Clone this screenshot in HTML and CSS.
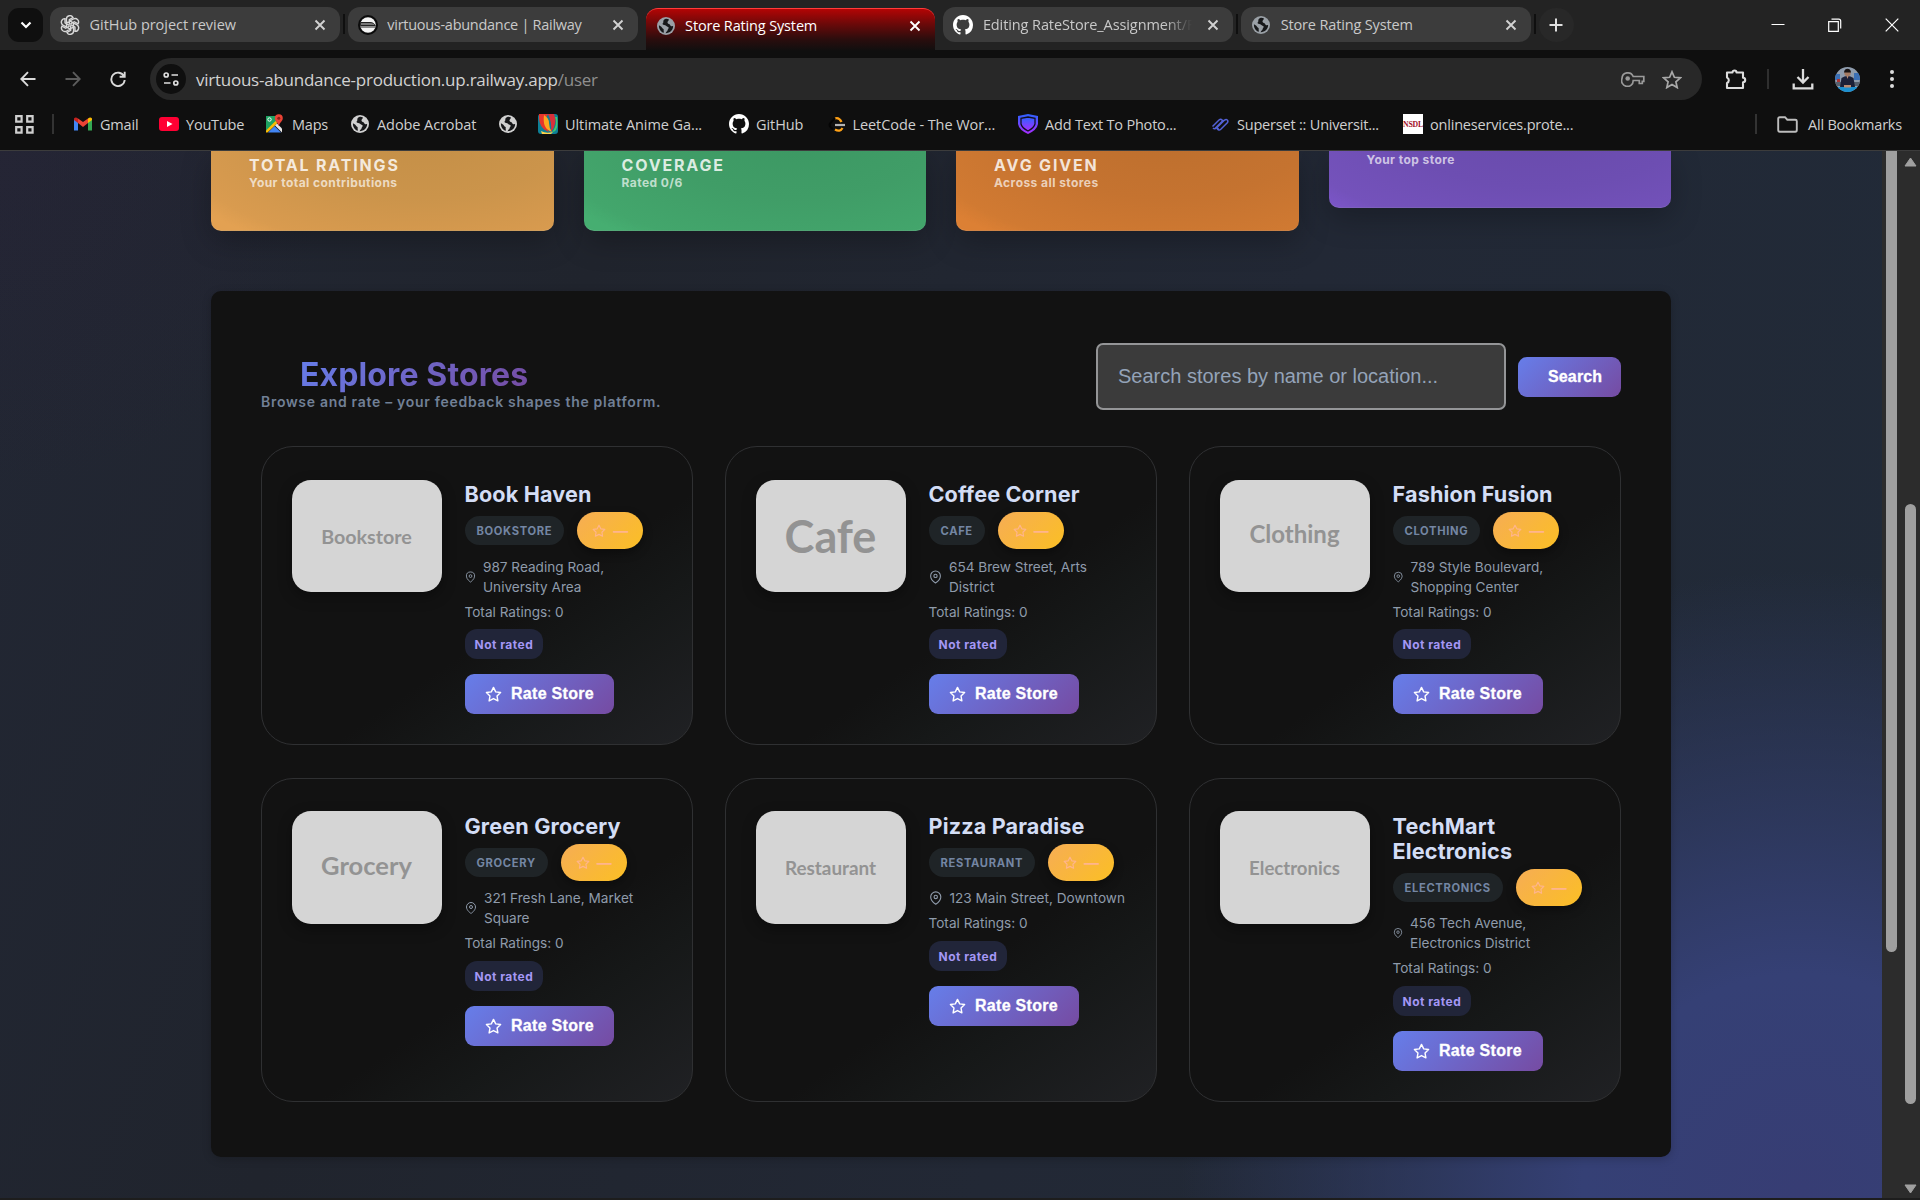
FILE: index.html
```html
<!DOCTYPE html>
<html lang="en">
<head>
<meta charset="utf-8">
<title>Store Rating System</title>
<link rel="stylesheet" href="styles.css">
</head>
<body>
<svg class="defs" width="0" height="0">
  <symbol id="x" viewBox="0 0 12 12"><path d="M1.5 1.5l9 9M10.5 1.5l-9 9" stroke="currentColor" stroke-width="1.9" fill="none"/></symbol>
  <symbol id="globe" viewBox="0 0 24 24"><circle cx="12" cy="12" r="12" fill="currentColor"/><path d="M11 2.5c-2 .8-3 2.500-2.500 4 .3 1-1.500 1.500-1 3 .8 1.600 3.500.6 4.500 2 1 1.500 3 1 3.500 2.500.4 1.300-1.500 2.500-1.500 4 0 1.300-2 1.500-2.500 3.500 6 0 10-4 10-9.500-2 .5-3.500 0-4-1.500-.6-1.600-3-1-3.500-3C13.700 5.500 16 5 16 3.200 14.500 2.400 12.500 2.100 11 2.500zM2.600 11c-.5 5 2.900 9.200 6.400 10.100.5-1.800-.5-2.600 0-4.100.3-1.200-1.700-1.500-2.500-3C5.800 12.600 4 12 2.600 11z" fill="#17181a"/></symbol>
  <symbol id="github" viewBox="0 0 16 16"><path fill="#fff" d="M8 0C3.580 0 0 3.580 0 8c0 3.540 2.290 6.530 5.470 7.590.4.070.55-.17.55-.38 0-.19-.01-.82-.01-1.490-2.010.37-2.530-.49-2.690-.94-.09-.23-.48-.94-.82-1.130-.28-.15-.68-.52-.01-.53.63-.01 1.080.58 1.230.82.72 1.210 1.870.87 2.330.66.07-.52.28-.87.51-1.070-1.780-.2-3.640-.89-3.640-3.950 0-.87.31-1.590.82-2.150-.08-.2-.36-1.020.08-2.120 0 0 .67-.21 2.200.82.64-.18 1.320-.27 2-.27s1.360.09 2 .27c1.530-1.040 2.200-.82 2.200-.82.44 1.100.16 1.920.08 2.120.51.56.82 1.270.82 2.150 0 3.070-1.870 3.750-3.650 3.950.29.25.54.73.54 1.480 0 1.070-.01 1.930-.01 2.200 0 .21.15.46.55.38A8.010 8.010 0 0016 8c0-4.420-3.580-8-8-8z"/></symbol>
  <symbol id="star" viewBox="0 0 24 24"><path d="M12 2l3.090 6.260L22 9.270l-5 4.870 1.180 6.880L12 17.770l-6.180 3.250L7 14.140 2 9.270l6.910-1.010z" fill="none" stroke="currentColor" stroke-width="2" stroke-linejoin="round"/></symbol>
  <symbol id="pin" viewBox="0 0 24 24"><path d="M21 10c0 7-9 13-9 13s-9-6-9-13a9 9 0 0118 0z" fill="none" stroke="currentColor" stroke-width="2"/><circle cx="12" cy="10" r="3" fill="none" stroke="currentColor" stroke-width="2"/></symbol>
  <symbol id="openai" viewBox="0 0 24 24"><g fill="none" stroke="#d8d8d8" stroke-width="1.700"><path id="petal" d="M12 7.200L7.700 9.700v-5A4.200 4.200 0 0115.600 3l-4.400 2.600v6"/><use href="#petal" transform="rotate(60 12 12)"/><use href="#petal" transform="rotate(120 12 12)"/><use href="#petal" transform="rotate(180 12 12)"/><use href="#petal" transform="rotate(240 12 12)"/><use href="#petal" transform="rotate(300 12 12)"/></g></symbol>
</svg>

<header class="browser">
  <div class="tabstrip">
    <button class="tab-search"><svg width="12" height="8" viewBox="0 0 12 8"><path d="M1.500 1.500L6 6l4.500-4.500" fill="none" stroke="#fff" stroke-width="2.200"/></svg></button>
    <div class="tab"><svg class="fav"><use href="#openai"/></svg><span class="t1">GitHub project review</span><svg class="close"><use href="#x"/></svg></div>
    <i class="tabsep"></i>
    <div class="tab"><svg class="fav" viewBox="0 0 20 20"><circle cx="10" cy="10" r="10" fill="#0b0b0b"/><circle cx="10" cy="10" r="7.800" fill="#f4f4f4"/><path d="M2.500 7.500h9.500c3 0 4.500 1.500 5.300 3H2.300zM2.400 12h15.100" fill="#777" stroke="#222" stroke-width="1"/></svg><span class="t2">virtuous-abundance | Railway</span><svg class="close"><use href="#x"/></svg></div>
    <i class="tabsep off"></i>
    <div class="tab active"><svg class="fav grey"><use href="#globe"/></svg><span class="t3">Store Rating System</span><svg class="close"><use href="#x"/></svg></div>
    <i class="tabsep off"></i>
    <div class="tab"><svg class="fav"><use href="#github"/></svg><span class="t4">Editing RateStore_Assignment/F</span><svg class="close"><use href="#x"/></svg></div>
    <i class="tabsep"></i>
    <div class="tab"><svg class="fav grey"><use href="#globe"/></svg><span class="t3">Store Rating System</span><svg class="close"><use href="#x"/></svg></div>
    <i class="tabsep"></i>
    <button class="newtab"><svg width="14" height="14"><path d="M7 .5v13M.5 7h13" stroke="#e0e0e0" stroke-width="2"/></svg></button>
    <div class="wincontrols">
      <svg width="14" height="14"><path d="M.5 6.500h13" stroke="#fff"/></svg>
      <svg width="14" height="14"><path d="M.7 3.700h9.600v9.600H.7zM3.500 1.200h7.200q2 0 2 2v7.300" fill="none" stroke="#fff" stroke-width="1.200"/></svg>
      <svg width="14" height="14"><path d="M.7.7l12.600 12.600M13.300.7L.7 13.300" stroke="#fff" stroke-width="1.200"/></svg>
    </div>
  </div>

  <div class="toolbar">
    <svg class="nav" viewBox="0 0 16 16"><path d="M15.500 8H1.500M8 1.200L1.300 8 8 14.800" fill="none" stroke="#dadada" stroke-width="1.900"/></svg>
    <svg class="nav" viewBox="0 0 16 16"><path d="M.5 8h14M8 1.200L14.700 8 8 14.800" fill="none" stroke="#5c5c5c" stroke-width="1.900"/></svg>
    <svg class="nav" viewBox="0 0 16 16"><path d="M14 5.300A6.700 6.700 0 1014.700 9M14.700.8v5H9.600" fill="none" stroke="#dadada" stroke-width="1.900"/></svg>
    <div class="omnibox">
      <div class="siteinfo"><svg width="16" height="14" viewBox="0 0 16 14"><g fill="none" stroke="#dedede" stroke-width="1.700"><circle cx="3.200" cy="3" r="2"/><path d="M8.500 3H15M1 11h6.500"/><circle cx="12.800" cy="11" r="2"/></g></svg></div>
      <div class="url">virtuous-abundance-production.up.railway.app<b>/user</b></div>
      <svg class="key" width="24" height="16" viewBox="0 0 24 16"><path d="M12.200 5.500H22.800v4.800h-1.500v2.200h-3v-3h-6.100A5.800 5.800 0 111 7.500a5.800 5.800 0 0111.200-2z" fill="none" stroke="#9a9a9a" stroke-width="1.700"/><circle cx="6.700" cy="7.500" r="2.300" fill="#9a9a9a"/></svg>
      <svg class="fave" width="20" height="19" viewBox="0 0 20 19"><path d="M10 1.800l2.400 5.500 6 .5-4.500 4 1.300 5.800L10 14.500l-5.200 3.100 1.300-5.800-4.500-4 6-.5z" fill="none" stroke="#a8a8a8" stroke-width="1.700"/></svg>
    </div>
    <div class="actions">
      <svg width="22" height="22" viewBox="0 0 22 22"><path d="M2 4.500h5.500a2 2 0 014 0H18v5.300a2.200 2.200 0 010 4.400V20H2v-5a3 3 0 000-5.500z" fill="none" stroke="#dcdcdc" stroke-width="2.100" stroke-linejoin="round"/></svg>
      <i></i>
      <svg class="dl" width="22" height="22" viewBox="0 0 22 22"><path d="M11 1v13M5.500 9l5.500 5.500L16.500 9M1.700 15.500v4.800h18.600v-4.800" fill="none" stroke="#dcdcdc" stroke-width="2.300"/></svg>
      <svg class="avatar" width="25" height="25" viewBox="0 0 25 25"><clipPath id="c"><circle cx="12.500" cy="12.500" r="12.500"/></clipPath><g clip-path="url(#c)"><path fill="#8f9cad" d="M0 0h25v25H0z"/><path fill="#3a6fb5" d="M0 7h5v6H0zM19 6h6v7h-6z"/><path fill="#a33" d="M2 12h3v3H2z"/><path fill="#55606e" d="M0 15h25v4H0z"/><path fill="#1a8fd0" d="M3 20h19v5H3z"/><path fill="#1b2038" d="M6.500 11q6-4 12 0l1.500 9H5z"/><circle cx="12.500" cy="6" r="3.200" fill="#a57a62"/><path fill="#171212" d="M9 5.500q.2-3.800 3.500-3.800T16 5.500z"/><path fill="#b98a70" d="M9 18h7v2.500H9zM11.500 9h2l-1 3z"/></g></svg>
      <svg class="dots" width="6" height="20" viewBox="0 0 6 20"><g fill="#dcdcdc"><circle cx="3" cy="3" r="2"/><circle cx="3" cy="10" r="2"/><circle cx="3" cy="17" r="2"/></g></svg>
    </div>
  </div>

  <div class="bookmarks">
    <svg class="apps" width="19" height="19" viewBox="0 0 19 19"><path d="M1.200 1.200h5.400v5.400H1.200zM12.200 1.200h5.400v5.400h-5.400zM1.200 12.200h5.400v5.400H1.200zM12.200 12.200h5.400v5.400h-5.400z" fill="none" stroke="#cfcfcf" stroke-width="2.200"/></svg>
    <i class="bsep"></i>
    <nav class="links">
      <a><svg viewBox="0 0 20 20"><path fill="#4285f4" d="M1 5v11.500h4V8z"/><path fill="#34a853" d="M19 5v11.500h-4V8z"/><path fill="#ea4335" d="M5 9V4.500L10 8l5-3.500V9l-5 4z"/><path fill="#c5221f" d="M1 4.500Q2.500 2.500 5 4.500V9L1 6z"/><path fill="#fbbc04" d="M19 4.500Q17.500 2.500 15 4.500V9l4-3z"/></svg><span>Gmail</span></a>
      <a><svg viewBox="0 0 20 20"><rect y="3" width="20" height="14" rx="3" fill="#ff0033"/><path fill="#fff" d="M8 7l5.500 3L8 13z"/></svg><span>YouTube</span></a>
      <a><svg viewBox="0 0 20 20"><path fill="#1ea362" d="M1 2h16L2 18H1z"/><path fill="#4285f4" d="M3 18.500L9.500 12l6.500 6.500z"/><path fill="#fbbc04" d="M1 16.500L10.500 7l2 2L2.500 18.500H1z"/><path fill="#e8e8e8" d="M10 11.500l2-2 5 5v4z"/><path fill="#ea4335" d="M13.800.3a4 4 0 014 4c0 3-3.300 4-4 8-.7-4-4-5-4-8a4 4 0 014-4z"/><circle cx="13.800" cy="4.300" r="1.500" fill="#8c1d18"/><circle cx="4.500" cy="5.500" r="1.700" fill="none" stroke="#fff"/></svg><span>Maps</span></a>
      <a><svg class="g"><use href="#globe"/></svg><span class="wide">Adobe Acrobat</span></a>
      <a><svg class="g"><use href="#globe"/></svg></a>
      <a><svg viewBox="0 0 20 20"><rect width="20" height="20" rx="3" fill="#0d7f96"/><path fill="#e5352c" d="M1 0h9Q4 8 11 18 0 14 1 0z"/><path fill="#ffa51f" d="M6 1q5 3 5 8t3 9Q4 15 6 1z"/><path fill="#d8313a" d="M10 0h6q4 9-3 18 1-10-3-18z"/><path fill="#42c86b" d="M17 3q3 8-3 15 7 0 5-15z"/><path fill="#ffd34a" d="M3 17q5 3 12 1l-2 2H4z"/></svg><span class="wide">Ultimate Anime Ga...</span></a>
      <a><svg><use href="#github"/></svg><span class="wide">GitHub</span></a>
      <a class="leet"><svg viewBox="0 0 20 20"><path d="M7 4.500q4-1.500 6.500 3.500M7 15.500q5 3 7.500-1.500" fill="none" stroke="#ffa116" stroke-width="2.300"/><path d="M7 11h10" stroke="#b3b3b3" stroke-width="2.200"/><path d="M7 4L2 9.500q-1.500 3 3 5.500" fill="none" stroke="#050505" stroke-width="2"/></svg><span class="wide">LeetCode - The Wor...</span></a>
      <a><svg viewBox="0 0 20 20"><defs><linearGradient id="sh" x2="0" y2="1"><stop stop-color="#2d62ff"/><stop offset="1" stop-color="#a92cff"/></linearGradient></defs><path d="M10 0l10 2v8q-1 6-10 10Q1 16 0 10V2z" fill="url(#sh)"/><path d="M10 3l7 1.300V10q-1 4-7 7-6-3-7-7V4.300z" fill="url(#sh)" stroke="#101020" stroke-width="1.300"/></svg><span>Add Text To Photo...</span></a>
      <a><svg viewBox="0 0 20 20"><path d="M2.500 12.500l6.500-6.500q1.800-1.500 3 0t-.5 3l-5 5q-2 1.500-3.500 0M8.500 14l-1 1q1.500 2 3.300.3l6.500-6.500q1.200-1.800 0-2.800t-3 .3l-5.500 5.500M5 14.500l8.500-8.500" fill="none" stroke="#5361d6" stroke-width="1.500"/></svg><span>Superset :: Universit...</span></a>
      <a><svg viewBox="0 0 20 20"><path fill="#fff" d="M0 0h20v20H0z"/><text x="0" y="12.500" class="nsdl" textLength="20" lengthAdjust="spacingAndGlyphs">NSDL</text></svg><span>onlineservices.prote...</span></a>
    </nav>
    <i class="bsep"></i>
    <div class="allbm"><svg width="21" height="17" viewBox="0 0 21 17"><path d="M1.200 2.700q0-1.500 1.500-1.500H8l2.300 2.500h8q1.500 0 1.500 1.500V14q0 1.700-1.500 1.700H2.700q-1.500 0-1.500-1.700z" fill="none" stroke="#bdbdbd" stroke-width="1.900"/></svg><span>All Bookmarks</span></div>
  </div>
</header>

<div class="viewport">
<main class="page">
  <section class="stats">
    <article class="stat amber"><h4>Total Ratings</h4><p>Your total contributions</p></article>
    <article class="stat green"><h4>Coverage</h4><p>Rated 0/6</p></article>
    <article class="stat orange"><h4>Avg Given</h4><p>Across all stores</p></article>
    <article class="stat purple"><p>Your top store</p></article>
  </section>

  <section class="panel">
    <div class="panel-head">
      <div><h2>Explore Stores</h2><p>Browse and rate – your feedback shapes the platform.</p></div>
      <form class="search"><div class="field">Search stores by name or location...</div><button type="button" class="btn">Search</button></form>
    </div>
    <div class="stores">
      <article class="store">
        <div class="thumb" style="font-size:19.700px"><span>Bookstore</span></div>
        <div class="info"><h3>Book Haven</h3>
          <div class="chips"><span class="cat">Bookstore</span><span class="score"><svg><use href="#star"/></svg>—</span></div>
          <div class="addr"><svg style="width:11px"><use href="#pin"/></svg><p>987 Reading Road,<br>University Area</p></div>
          <p class="total">Total Ratings: 0</p><span class="mine">Not rated</span>
          <button class="btn rate"><svg><use href="#star"/></svg>Rate Store</button></div>
      </article>
      <article class="store">
        <div class="thumb" style="font-size:45px"><span>Cafe</span></div>
        <div class="info"><h3>Coffee Corner</h3>
          <div class="chips"><span class="cat">Cafe</span><span class="score"><svg><use href="#star"/></svg>—</span></div>
          <div class="addr"><svg style="width:13px"><use href="#pin"/></svg><p>654 Brew Street, Arts<br>District</p></div>
          <p class="total">Total Ratings: 0</p><span class="mine">Not rated</span>
          <button class="btn rate"><svg><use href="#star"/></svg>Rate Store</button></div>
      </article>
      <article class="store">
        <div class="thumb raised" style="font-size:24px"><span>Clothing</span></div>
        <div class="info"><h3>Fashion Fusion</h3>
          <div class="chips"><span class="cat">Clothing</span><span class="score"><svg><use href="#star"/></svg>—</span></div>
          <div class="addr"><svg style="width:10.500px"><use href="#pin"/></svg><p>789 Style Boulevard,<br>Shopping Center</p></div>
          <p class="total">Total Ratings: 0</p><span class="mine">Not rated</span>
          <button class="btn rate"><svg><use href="#star"/></svg>Rate Store</button></div>
      </article>
      <article class="store">
        <div class="thumb raised" style="font-size:25.500px"><span>Grocery</span></div>
        <div class="info"><h3>Green Grocery</h3>
          <div class="chips"><span class="cat">Grocery</span><span class="score"><svg><use href="#star"/></svg>—</span></div>
          <div class="addr"><svg style="width:12px"><use href="#pin"/></svg><p>321 Fresh Lane, Market<br>Square</p></div>
          <p class="total">Total Ratings: 0</p><span class="mine">Not rated</span>
          <button class="btn rate"><svg><use href="#star"/></svg>Rate Store</button></div>
      </article>
      <article class="store">
        <div class="thumb" style="font-size:18.900px"><span>Restaurant</span></div>
        <div class="info"><h3>Pizza Paradise</h3>
          <div class="chips"><span class="cat">Restaurant</span><span class="score"><svg><use href="#star"/></svg>—</span></div>
          <div class="addr"><svg style="width:13.500px"><use href="#pin"/></svg><p>123 Main Street, Downtown</p></div>
          <p class="total">Total Ratings: 0</p><span class="mine">Not rated</span>
          <button class="btn rate"><svg><use href="#star"/></svg>Rate Store</button></div>
      </article>
      <article class="store">
        <div class="thumb" style="font-size:18.600px"><span>Electronics</span></div>
        <div class="info"><h3>TechMart<br>Electronics</h3>
          <div class="chips"><span class="cat">Electronics</span><span class="score"><svg><use href="#star"/></svg>—</span></div>
          <div class="addr"><svg style="width:10px"><use href="#pin"/></svg><p>456 Tech Avenue,<br>Electronics District</p></div>
          <p class="total">Total Ratings: 0</p><span class="mine">Not rated</span>
          <button class="btn rate"><svg><use href="#star"/></svg>Rate Store</button></div>
      </article>
    </div>
  </section>
</main>
<div class="sb inner"><i></i></div>
<div class="sb outer"><svg width="13" height="10"><path d="M6.500 1L12 9H1z" fill="#a0a0a0" stroke="#a0a0a0" stroke-linejoin="round"/></svg><i></i><svg class="down" width="13" height="10"><path d="M6.500 9L12 1H1z" fill="#a0a0a0" stroke="#a0a0a0" stroke-linejoin="round"/></svg></div>
</div>
<div class="edge"></div>
</body>
</html>
```
FILE: styles.css
```css
* { box-sizing: border-box; }
body { margin: 0; width: 1920px; height: 1200px; overflow: hidden; display: flex; flex-direction: column; background: #0f0f0f; font-family: Inter, sans-serif; }
h2, h3, h4, p { margin: 0; }
svg { display: block; flex: none; }
button { border: 0; padding: 0; font: inherit; }
.defs { position: absolute; }

/* browser chrome */
.browser { height: 151px; flex: none; border-bottom: 1px solid #3c3c3c; font-family: "Open Sans", sans-serif; }
.tabstrip { height: 50px; background: #232323; display: flex; align-items: flex-start; padding: 7px 17px 0 8px; }
.tab-search { width: 35px; height: 34px; margin: 1px 7px 0 0; border-radius: 11px; background: #0f0f0f; display: flex; align-items: center; justify-content: center; }
.tab { width: 289.800px; height: 35px; border-radius: 12px; background: #3c3c3c; display: flex; align-items: center; padding: 0 14px 0 10px; color: #c9c9c9; font-size: 14.500px; }
.tab span { flex: 1; overflow: hidden; white-space: nowrap; margin: 0 13px 0 9.500px; line-height: 24px; }
.fav { width: 20px; height: 20px; }
.fav.grey { width: 18px; height: 18px; color: #9aa0a6; margin: 0 1px; }
.close { width: 12px; height: 12px; color: #d2d2d2; }
.tab.active { height: 43px; margin-top: 1px; padding-bottom: 9px; border-radius: 12px 12px 0 0; background: linear-gradient(#b30505, #6d0909 35%, #2b0d0d 72%, #0f0f0f); border-top: 1px solid #ff3a3a; color: #fff; }
.tab.active .close { color: #fff; }
.tabsep { width: 2px; height: 20px; margin: 7px 3px 0; background: #0f0f0f; }
.tabsep.off { background: none; }
.t1 { letter-spacing: -.03px; }
.t3 { letter-spacing: -.15px; }
.t4 { letter-spacing: -.1px; -webkit-mask: linear-gradient(90deg, #000 86%, transparent 99%); mask: linear-gradient(90deg, #000 86%, transparent 99%); }
.t2 { letter-spacing: -.28px; }
.newtab { width: 35px; height: 34px; margin-top: 1px; border-radius: 17px; background: #282828; display: flex; align-items: center; justify-content: center; }
.wincontrols { margin-left: auto; display: flex; gap: 43px; padding: 11px 4px 0 0; }

.toolbar { height: 58px; display: flex; align-items: center; padding: 0 22px 0 20px; }
.nav { width: 16px; height: 16px; margin-right: 29px; }
.omnibox { width: 1552px; height: 42px; margin-left: -5px; border-radius: 21px; background: #282828; display: flex; align-items: center; padding: 0 20px 0 6px; }
.siteinfo { width: 30px; height: 30px; border-radius: 50%; background: #0f0f0f; display: flex; align-items: center; justify-content: center; }
.url { margin-left: 10px; flex: 1; font-size: 17px; color: #d2d2d2; white-space: nowrap; letter-spacing: -.25px; }
.url b { font-weight: 400; color: #8f8f8f; }
.fave { margin-left: 17px; }
.actions { flex: 1; display: flex; align-items: center; margin-left: 23px; }
.actions i { width: 2px; height: 20px; margin-left: 20px; background: #2f2f2f; }
.dl { margin-left: 23px; }
.avatar { margin-left: 21px; }
.dots { margin-left: 29px; }

.bookmarks { height: 46px; margin-top: -8px; display: flex; align-items: center; padding: 2px 18px 0 15px; color: #cfcfcf; font-size: 14.500px; letter-spacing: -.2px; white-space: nowrap; }
.bsep { width: 2px; height: 20px; background: #333; margin-left: 18px; }
.links { display: grid; flex: 1; margin-left: 19px; grid-template-columns: 86px 106px 85px 148px 40px 191px 99px 190px 192px 193px 1fr; }
.links a { display: flex; align-items: center; gap: 7px; }
.links a.leet { gap: 4.500px; }
.links svg { width: 20px; height: 20px; }
.links svg.g { width: 18px; height: 18px; margin: 0 1px; color: #d0d0d0; }
.wide { letter-spacing: -.08px; }
.nsdl { font: bold 8px "Liberation Serif", serif; fill: #a3122a; }
.allbm { display: flex; align-items: center; gap: 10px; margin-left: 20px; }

/* page */
.viewport { flex: 1; display: flex; min-height: 0; }
.page { width: 1882px; padding: 0 211px; display: flex; flex-direction: column; overflow: hidden;
  background: radial-gradient(circle 620px at 1800px 1040px, #373d74 0, #354075 35%, rgba(49,60,104,.75) 60%, rgba(40,50,75,0) 100%), radial-gradient(circle 340px at 0 0, rgba(45,30,55,.25), transparent), linear-gradient(110deg, #222734 0, #20242d 28%, #222835 60%, #212b39 100%); }
.stats { display: grid; grid-template-columns: repeat(4, 1fr); gap: 30px; align-items: start; }
.stat { height: 80px; padding: 0 38px 39px; border-radius: 0 0 10px 10px; display: flex; flex-direction: column; justify-content: flex-end; box-shadow: 0 10px 30px rgba(0,0,0,.25); border-bottom: 1px solid rgba(255,255,255,.1); }
.stat h4 { font-size: 16px; line-height: 19px; font-weight: 700; letter-spacing: 1.830px; text-transform: uppercase; white-space: nowrap; color: rgba(255,255,255,.82); }
.stat p { font-size: 12px; line-height: 16px; font-weight: 700; letter-spacing: .44px; color: rgba(255,255,255,.68); }
.amber { background: radial-gradient(ellipse 80% 160% at 62% -20%, #c48f47, #cb944b 50%, #d99b4f 90%, transparent), #e3a152; }
.green { background: radial-gradient(ellipse 80% 160% at 62% -20%, #3c9863, #409d67 50%, #43a66c 90%, transparent), #46ae71; }
.orange { background: radial-gradient(ellipse 80% 160% at 62% -20%, #bd6f2e, #c57330 50%, #d17a32 90%, transparent), #dc8034; }
.purple { height: 57px; background: radial-gradient(ellipse 80% 190% at 62% -30%, #694bac, #6d4eb2 50%, #7452bb 90%, transparent), #7a55c6; }

.panel { margin-top: 60px; height: 866px; background: #121212; border-radius: 10px; padding: 52px 50px; box-shadow: 0 2px 10px rgba(0,0,0,.2); }
.panel-head { height: 67px; display: flex; justify-content: space-between; }
.panel-head h2 { width: max-content; margin: 13px 0 0 38px; padding-left: 1px; font-size: 32px; line-height: 37px; font-weight: 700; letter-spacing: .12px; background: linear-gradient(135deg, #667eea, #764ba2); -webkit-background-clip: text; background-clip: text; color: transparent; }
.panel-head p { font-size: 14px; line-height: 17px; font-weight: 600; letter-spacing: .7px; color: #718096; }
.search { display: flex; align-items: center; gap: 12px; font-family: "Liberation Sans", sans-serif; }
.field { width: 410px; height: 67px; border: 2px solid #949597; border-radius: 7px; background: #3b3b3b; color: #94a3b8; font-size: 20px; line-height: 62px; padding-left: 20px; white-space: nowrap; }
.btn { flex: none; height: 40px; border-radius: 9px; background: linear-gradient(135deg, #667eea, #764ba2); color: #fff; font: bold 16px "Liberation Sans", sans-serif; letter-spacing: .15px; -webkit-text-stroke: .3px #fff; display: flex; align-items: center; }
.search .btn { width: 103px; padding-left: 30px; }

.stores { margin-top: 36px; display: grid; grid-template-columns: repeat(3, 432px); grid-template-rows: 299px 324px; gap: 33px 32px; }
.store { border: 1px solid #2f3032; border-radius: 32px; padding: 33px 30px; display: flex; gap: 22.500px; background: linear-gradient(145deg, #121212 0, #121212 58%, #161818 72%, #202124 100%); }
.thumb { flex: none; width: 150px; height: 112px; border-radius: 19px; background: #d5d5d5; color: #939393; font-family: Lato, sans-serif; font-weight: 700; display: flex; align-items: center; justify-content: center; box-shadow: 0 5px 14px rgba(0,0,0,.35); }
.thumb span { margin-left: -1px; }
.store:nth-child(n+4) .thumb { height: 113px; margin-top: -1px; }
.thumb.raised { padding-bottom: 5px; }
.info { display: flex; flex-direction: column; align-items: flex-start; flex: 1; }
.info h3 { font-size: 21.600px; line-height: 25px; font-weight: 700; letter-spacing: .15px; color: #d3ddf5; padding-top: 2px; margin-bottom: 5px; white-space: nowrap; }
.chips { display: flex; align-items: center; gap: 13px; height: 37px; }
.cat { height: 29px; line-height: 30px; padding: 0 12px; border-radius: 15px; background: #1f2427; color: #7486a3; font-size: 11.200px; font-weight: 700; letter-spacing: .66px; text-transform: uppercase; }
.score { width: 66px; height: 37px; border-radius: 19px; background: linear-gradient(135deg, #f6ad55, #fbbf24); color: #ffb58c; display: flex; align-items: center; gap: 7px; padding-left: 15px; font-size: 15px; font-weight: 700; box-shadow: 0 4px 10px rgba(0,0,0,.35); }
.score svg { width: 14px; height: 14px; }
.addr { display: flex; align-items: center; gap: 7.500px; margin-top: 8px; color: #8f9bab; }
.store:nth-child(n+4) .addr { margin-top: 7px; }
.addr svg { height: 14px; }
.addr p, .total { font-size: 13.600px; line-height: 20px; white-space: nowrap; color: #8f9bab; }
.total { margin-top: 5px; }
.mine { margin-top: 7px; height: 30px; line-height: 31px; padding: 0 10px; border-radius: 12px; background: #212539; color: #a497f5; font-size: 12px; font-weight: 700; letter-spacing: .48px; }
.rate { width: 149px; margin-top: 15px; padding-left: 20px; gap: 9.500px; white-space: nowrap; letter-spacing: .3px; }
.store:nth-child(n+4) .total { margin-bottom: 1px; }
.store:nth-child(n+2):not(:nth-child(4)) .rate { width: 150px; }
.rate svg { width: 17px; height: 17px; }

/* scrollbars */
.sb { width: 19px; background: #2c2c2c; display: flex; flex-direction: column; align-items: center; }
.sb i { width: 11px; background: #9f9f9f; }
.inner i { height: 801px; border-radius: 0 0 6px 6px; }
.outer { padding: 6px 0 4px; }
.outer i { height: 600px; margin-top: 337px; border-radius: 6px; }
.down { margin-top: auto; }
.edge { height: 2px; background: #1d1d1d; flex: none; }
```
